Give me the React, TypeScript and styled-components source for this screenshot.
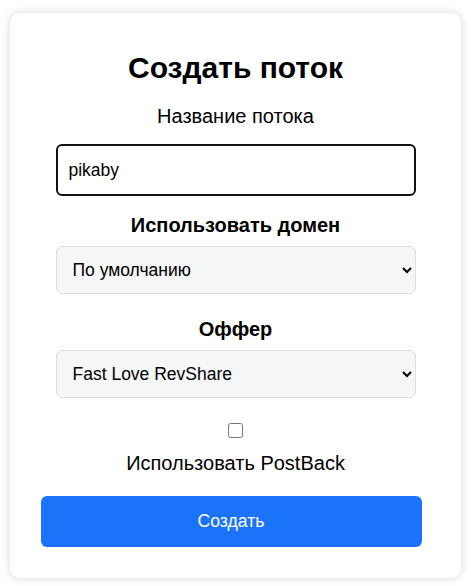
import React from "react";
import styled, { createGlobalStyle } from "styled-components";

const Global = createGlobalStyle`
  html, body { margin: 0; padding: 0; background: #ffffff; }
  body { font-family: "Liberation Sans", Arial, sans-serif; color: #000; }
  * { box-sizing: border-box; }
`;

const Page = styled.div`
  padding: 13px 10px 8px 10px;
`;

const Card = styled.form`
  width: 451px;
  background: #fff;
  border-radius: 10px;
  box-shadow: 0 0 10px rgba(0, 0, 0, 0.16);
  padding: 39px 0 31px 0;
  display: flex;
  flex-direction: column;
  align-items: center;
`;

const Title = styled.h1`
  margin: 0;
  font-size: 30px;
  line-height: 32px;
  font-weight: 700;
  text-align: center;
`;

const Label = styled.label<{ $bold?: boolean; $top: number; $bottom: number }>`
  display: block;
  margin: ${(p) => p.$top}px 0 ${(p) => p.$bottom}px 0;
  font-size: 20px;
  line-height: 22px;
  font-weight: ${(p) => (p.$bold ? 700 : 400)};
  text-align: center;
`;

const TextInput = styled.input`
  width: 360px;
  height: 52px;
  padding: 0 11px;
  border: 2px solid #111;
  border-radius: 6px;
  font-family: "Liberation Sans", Arial, sans-serif;
  font-size: 17.5px;
  color: #000;
  background: #fff;
  outline: none;
`;

const Select = styled.select`
  width: 360px;
  height: 48px;
  padding: 0 10px 0 12px;
  border: 1px solid #dcdfe3;
  border-radius: 6px;
  background: #f5f6f8;
  font-family: "Liberation Sans", Arial, sans-serif;
  font-size: 17.5px;
  color: #000;
  outline: none;
`;

const Check = styled.input`
  width: 15px;
  height: 15px;
  margin: 25px 0 0 0;
`;

const Button = styled.button`
  width: 381px;
  height: 51px;
  margin: 22px 0 0 -9px;
  border: none;
  border-radius: 6px;
  background: #1a73f8;
  color: #fff;
  font-family: "Liberation Sans", Arial, sans-serif;
  font-size: 17.6px;
  cursor: pointer;
`;

export default function App() {
  return (
    <>
      <Global />
      <Page>
        <Card onSubmit={(e) => e.preventDefault()}>
          <Title>Создать поток</Title>
          <Label $top={21} $bottom={17}>Название потока</Label>
          <TextInput type="text" defaultValue="pikaby" />
          <Label $bold $top={18} $bottom={10}>Использовать домен</Label>
          <Select defaultValue="default">
            <option value="default">По умолчанию</option>
          </Select>
          <Label $bold $top={24} $bottom={10}>Оффер</Label>
          <Select defaultValue="fl">
            <option value="fl">Fast Love RevShare</option>
          </Select>
          <Check type="checkbox" />
          <Label $top={14} $bottom={0}>Использовать PostBack</Label>
          <Button type="submit">Создать</Button>
        </Card>
      </Page>
    </>
  );
}
